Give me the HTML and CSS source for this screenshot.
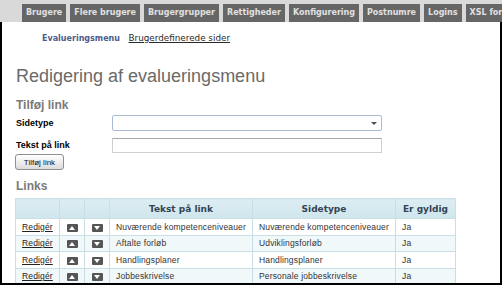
FILE: index.html
```html
<!DOCTYPE html>
<html lang="da">
<head>
    <meta charset="UTF-8">
    <title>Redigering af evalueringsmenu</title>
    <link rel="stylesheet" href="styles.css">
</head>
<body>

    <div class="topbar">
        <a class="tab" href="#">Brugere</a>
        <a class="tab" href="#">Flere brugere</a>
        <a class="tab" href="#">Brugergrupper</a>
        <a class="tab" href="#">Rettigheder</a>
        <a class="tab" href="#">Konfigurering</a>
        <a class="tab" href="#">Postnumre</a>
        <a class="tab" href="#">Logins</a>
        <a class="tab" href="#">XSL formater</a>
    </div>

    <div class="page">
        <div class="subnav">
            <span class="current">Evalueringsmenu</span>
            <a href="#">Brugerdefinerede sider</a>
        </div>

        <h1>Redigering af evalueringsmenu</h1>

        <h2>Tilføj link</h2>
        <form class="add-form">
            <div class="form-row">
                <label>Sidetype</label>
                <div class="select-box"><span class="arrow"></span></div>
            </div>
            <div class="form-row">
                <label>Tekst på link</label>
                <input type="text" class="text-input">
            </div>
            <button type="button" class="add-button">Tilføj link</button>
        </form>

        <h2 class="links-title">Links</h2>
        <table class="links">
            <thead>
                <tr>
                    <th class="col-edit"></th>
                    <th class="col-move"></th>
                    <th class="col-move"></th>
                    <th class="col-text">Tekst på link</th>
                    <th class="col-type">Sidetype</th>
                    <th class="col-valid">Er gyldig</th>
                </tr>
            </thead>
            <tbody>
                <tr>
                    <td><a href="#">Redigér</a></td>
                    <td class="mv"><span class="btn up"></span></td>
                    <td class="mv"><span class="btn down"></span></td>
                    <td>Nuværende kompetenceniveauer</td>
                    <td>Nuværende kompetenceniveauer</td>
                    <td>Ja</td>
                </tr>
                <tr class="alt">
                    <td><a href="#">Redigér</a></td>
                    <td class="mv"><span class="btn up"></span></td>
                    <td class="mv"><span class="btn down"></span></td>
                    <td>Aftalte forløb</td>
                    <td>Udviklingsforløb</td>
                    <td>Ja</td>
                </tr>
                <tr>
                    <td><a href="#">Redigér</a></td>
                    <td class="mv"><span class="btn up"></span></td>
                    <td class="mv"><span class="btn down"></span></td>
                    <td>Handlingsplaner</td>
                    <td>Handlingsplaner</td>
                    <td>Ja</td>
                </tr>
                <tr class="alt">
                    <td><a href="#">Redigér</a></td>
                    <td class="mv"><span class="btn up"></span></td>
                    <td class="mv"><span class="btn down"></span></td>
                    <td>Jobbeskrivelse</td>
                    <td>Personale jobbeskrivelse</td>
                    <td>Ja</td>
                </tr>
            </tbody>
        </table>
    </div>

</body>
</html>
```

FILE: styles.css
```css
body {
    margin: 0;
    padding: 0;
    width: 502px;
    height: 285px;
    overflow: hidden;
    background: #ffffff;
    font-family: 'Liberation Sans', Arial, sans-serif;
}

.topbar {
    height: 22px;
    background-color: #d9d9d9;
    display: flex;
    gap: 4px;
    padding-left: 22px;
    box-sizing: border-box;
    align-items: flex-end;
    white-space: nowrap;
    overflow: hidden;
}

.tab {
    height: 18px;
    line-height: 18px;
    background-color: #666666;
    color: #e0e0e0;
    font-family: 'DejaVu Sans', Verdana, sans-serif;
    font-weight: bold;
    font-size: 8px;
    padding: 0 4px;
    text-decoration: none;
    flex-shrink: 0;
}

.page {
    height: 263px;
    box-sizing: border-box;
    border: 2px solid #000000;
    border-top: none;
    padding: 0 0 0 14px;
    overflow: hidden;
}

.subnav {
    padding: 10px 0 0 26px;
    height: 23px;
    font-family: 'DejaVu Sans', Verdana, sans-serif;
    font-size: 8px;
    line-height: 12px;
}

.subnav .current {
    color: #4d5d8c;
    font-weight: bold;
    margin-right: 6px;
}

.subnav a {
    color: #2a2a2a;
    font-size: 8.8px;
    text-decoration: underline;
}

h1 {
    margin: 10px 0 0 0;
    font-size: 18px;
    font-weight: normal;
    color: #6a6a6a;
    line-height: 22px;
}

h2 {
    margin: 11px 0 0 0;
    font-size: 12px;
    color: #7a7a7a;
    line-height: 14px;
}

.add-form {
    margin-top: 3px;
}

.form-row {
    display: flex;
    align-items: center;
    height: 16px;
    margin-bottom: 6px;
}

.form-row label {
    width: 96px;
    font-size: 9px;
    font-weight: bold;
    color: #000000;
}

.select-box {
    width: 270px;
    height: 16px;
    box-sizing: border-box;
    border: 1px solid #a9bbd3;
    border-radius: 2px;
    position: relative;
    background: #ffffff;
}

.select-box .arrow {
    position: absolute;
    right: 4px;
    top: 6px;
    border-left: 3px solid transparent;
    border-right: 3px solid transparent;
    border-top: 3px solid #4a4a60;
}

.text-input {
    width: 270px;
    height: 15px;
    box-sizing: border-box;
    margin: 0;
    border: 1px solid #d0d0d0;
    border-top-color: #a8a8a8;
    padding: 0;
}

.add-button {
    display: block;
    margin: -5px 0 0 -1px;
    height: 16px;
    width: 49px;
    padding: 0;
    border: 1px solid #8f8f8f;
    border-radius: 3px;
    background: linear-gradient(#ffffff, #dcdcdc);
    font-family: 'Liberation Sans', Arial, sans-serif;
    font-size: 8px;
    color: #111111;
}

.links-title {
    margin-top: 9px;
}

table.links {
    margin: 5px 0 0 -1px;
    border-collapse: collapse;
    width: 441px;
    font-size: 8.5px;
}

table.links th,
table.links td {
    border: 1px solid #c9dfe5;
    padding: 0 0 0 6px;
    text-align: left;
    color: #333333;
    white-space: nowrap;
}

table.links th {
    height: 19px;
    background: linear-gradient(#dcedf2, #cfe6ec);
    font-family: 'DejaVu Sans', Verdana, sans-serif;
    font-size: 9px;
    color: #334455;
    text-align: center;
    padding: 0;
}

table.links td {
    height: 15.5px;
    letter-spacing: 0.15px;
}

table.links tr.alt td {
    background-color: #f1f8fa;
}

.col-edit { width: 43px; }
.col-move { width: 24px; }
.col-text { width: 142px; }
.col-type { width: 142px; }

table.links td a {
    color: #222222;
    text-decoration: underline;
}

table.links td.mv {
    padding: 0;
    text-align: center;
}

.btn {
    display: inline-block;
    width: 11px;
    height: 8px;
    background-color: #555555;
    border-radius: 1px;
    position: relative;
    vertical-align: middle;
}

.btn::after {
    content: "";
    position: absolute;
    left: 2px;
    border-left: 3.5px solid transparent;
    border-right: 3.5px solid transparent;
}

.btn.up::after {
    top: 2px;
    border-bottom: 4px solid #ffffff;
}

.btn.down::after {
    top: 2px;
    border-top: 4px solid #ffffff;
}
```
